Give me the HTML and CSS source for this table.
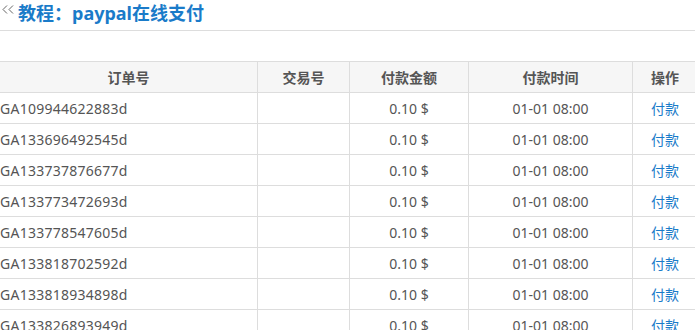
FILE: index.html
```html
<!DOCTYPE html>
<html lang="zh-CN">
<head>
    <meta charset="UTF-8">
    <title>教程：paypal在线支付</title>
    <link rel="stylesheet" href="styles.css">
</head>
<body>
    <div class="page-head">
        <a class="back" href="#">
            <svg width="12" height="10" viewBox="0 0 12 10">
                <polyline points="5,0.5 1,4.5 5,8.5" />
                <polyline points="11,0.5 7,4.5 11,8.5" />
            </svg>
        </a>
        <h1>教程：paypal在线支付</h1>
    </div>

    <table class="order-table">
        <colgroup>
            <col class="c-order">
            <col class="c-trade">
            <col class="c-amount">
            <col class="c-time">
            <col class="c-op">
        </colgroup>
        <thead>
            <tr>
                <th>订单号</th>
                <th>交易号</th>
                <th>付款金额</th>
                <th>付款时间</th>
                <th>操作</th>
            </tr>
        </thead>
        <tbody>
            <tr><td class="order-no">GA109944622883d</td><td></td><td>0.10 $</td><td>01-01 08:00</td><td><a href="#">付款</a></td></tr>
            <tr><td class="order-no">GA133696492545d</td><td></td><td>0.10 $</td><td>01-01 08:00</td><td><a href="#">付款</a></td></tr>
            <tr><td class="order-no">GA133737876677d</td><td></td><td>0.10 $</td><td>01-01 08:00</td><td><a href="#">付款</a></td></tr>
            <tr><td class="order-no">GA133773472693d</td><td></td><td>0.10 $</td><td>01-01 08:00</td><td><a href="#">付款</a></td></tr>
            <tr><td class="order-no">GA133778547605d</td><td></td><td>0.10 $</td><td>01-01 08:00</td><td><a href="#">付款</a></td></tr>
            <tr><td class="order-no">GA133818702592d</td><td></td><td>0.10 $</td><td>01-01 08:00</td><td><a href="#">付款</a></td></tr>
            <tr><td class="order-no">GA133818934898d</td><td></td><td>0.10 $</td><td>01-01 08:00</td><td><a href="#">付款</a></td></tr>
            <tr><td class="order-no">GA133826893949d</td><td></td><td>0.10 $</td><td>01-01 08:00</td><td><a href="#">付款</a></td></tr>
        </tbody>
    </table>
</body>
</html>
```

FILE: styles.css
```css
html, body {
    overflow: hidden;
}
body {
    margin: 0;
    font-family: "Noto Sans", "Noto Sans CJK SC", sans-serif;
    font-size: 14px;
    color: #555;
    background: #fff;
}
.page-head {
    display: flex;
    align-items: flex-start;
    height: 30px;
    border-bottom: 1px solid #ddd;
    margin-bottom: 30px;
}
.back {
    display: block;
    padding: 5px 4px 0 2px;
    line-height: 0;
}
.back polyline {
    fill: none;
    stroke: #666;
    stroke-width: 1;
}
h1 {
    margin: 0;
    font-family: "Noto Sans", "Noto Sans CJK SC", sans-serif;
    font-size: 18px;
    line-height: 26px;
    font-weight: bold;
    color: #1a7bc9;
}
.order-table {
    width: 698px;
    table-layout: fixed;
    border-collapse: separate;
    border-spacing: 0;
    border-top: 1px solid #ddd;
}
.c-order { width: 258px; }
.c-trade { width: 92px; }
.c-amount { width: 119px; }
.c-time { width: 164px; }
.c-op { width: 65px; }
th, td {
    height: 30px;
    padding: 0;
    border-right: 1px solid #ddd;
    border-bottom: 1px solid #ddd;
    text-align: center;
    white-space: nowrap;
    overflow: hidden;
}
th {
    background: #f6f6f6;
    font-weight: bold;
    color: #555;
}
td.order-no {
    text-align: left;
    letter-spacing: 0.25px;
}
td a {
    color: #1a7bc9;
    text-decoration: none;
}
```
